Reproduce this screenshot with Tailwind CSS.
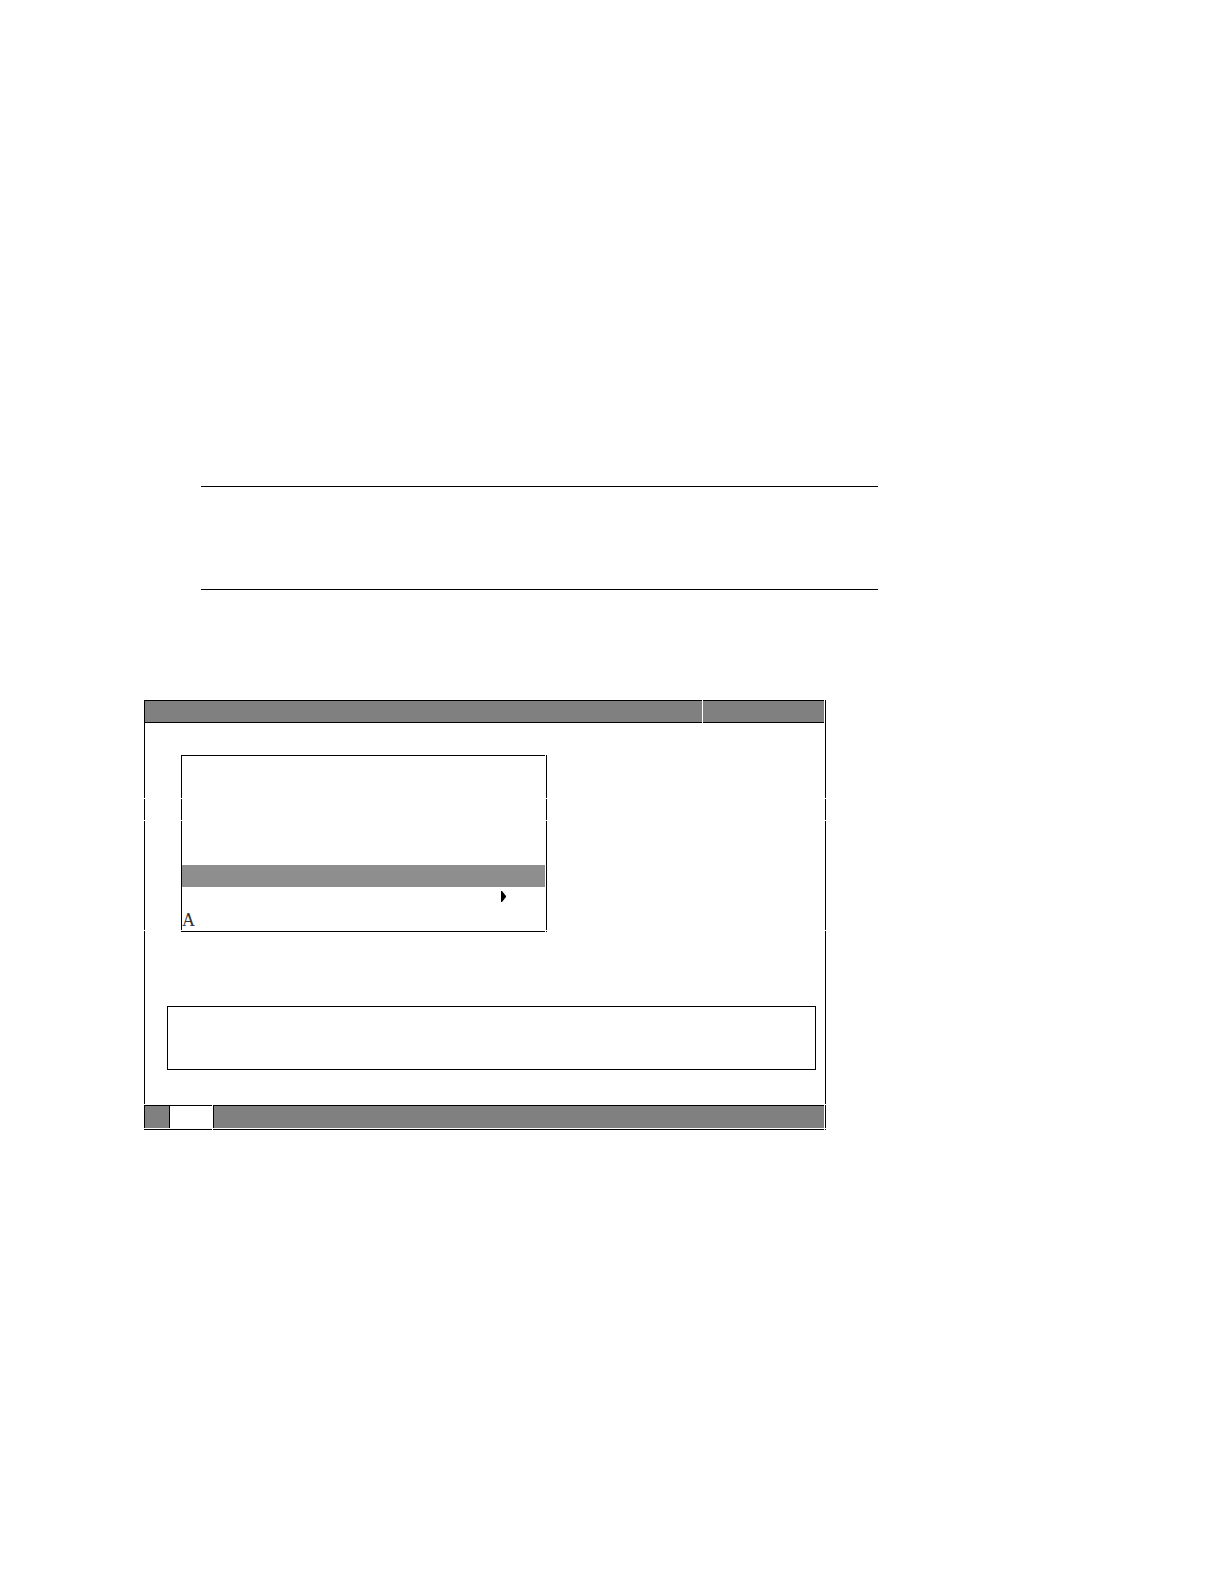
<!DOCTYPE html>
<html lang="en">
<head>
    <meta charset="UTF-8">
    <meta name="viewport" content="width=device-width, initial-scale=1.0">
    <title>Menu Window</title>
    <!-- Tailwind CSS for styling -->
    <script src="https://cdn.jsdelivr.net/npm/@tailwindcss/browser@4"></script>
</head>
<body class="bg-white text-black font-['Liberation_Serif',serif] min-h-screen">

    <!-- Heading area between two rules -->
    <header class="pt-[486px] pl-[201px] pr-[346px]">
        <div class="h-[104px] border-y border-black"></div>
    </header>

    <!-- Window -->
    <main class="pt-[110px] pb-36 pl-36 pr-[398px]">
        <div class="relative">

            <!-- Window frame -->
            <div class="border-x border-black">

                <!-- Title bar -->
                <div class="flex h-[23px] gap-px pr-px">
                    <div class="grow bg-[#808080] border-y border-black"></div>
                    <div class="w-[121px] bg-[#808080] border-y border-black"></div>
                </div>

                <!-- Window body -->
                <div class="pt-8 pb-[35px]">
                    <div class="ml-9 w-[366px]">
                        <ul class="border-x border-black pr-px">
                            <li class="h-[22px] border-t border-black"></li>
                            <li class="h-[22px]"></li>
                            <li class="h-[22px]"></li>
                            <li class="h-[22px]"></li>
                            <li class="h-[22px]"></li>
                            <li class="h-[22px] bg-[#8e8e8e]"></li>
                            <li>
                                <button type="button" aria-label="Open submenu" class="flex h-[22px] w-full items-start justify-end pt-1 pr-[39px]">
                                    <svg class="block h-[11px] w-[5px]" viewBox="0 0 5 11">
                                        <path d="M0 0h1l4 5v1l-4 5H0z" fill="#000"/>
                                    </svg>
                                </button>
                            </li>
                            <li>
                                <button type="button" class="block h-[22px] w-full text-left text-[18px] leading-[22px] text-[#333]">A</button>
                            </li>
                            <li class="border-b border-black"></li>
                        </ul>
                    </div>

                    <!-- Message box -->
                    <div class="mt-[74px] ml-[22px] mr-[9px] h-16 border border-black"></div>
                </div>

            </div>

            <!-- Status bar -->
            <div class="flex h-[25px] border-b border-r border-black pr-px pb-px">
                <div class="w-[26px] bg-[#808080] border-t border-x border-black"></div>
                <button type="button" aria-label="Page" class="w-[42px] border-t border-black"></button>
                <div class="w-px"></div>
                <div class="grow bg-[#808080] border-t border-l border-black"></div>
            </div>

            <!-- Cell seams: thin breaks in the frame lines -->
            <div class="absolute inset-x-0 top-[98px] h-px bg-white"></div>
            <div class="absolute inset-x-0 top-[120px] h-px bg-white"></div>
            <div class="absolute inset-x-0 top-[230px] h-px bg-white"></div>
            <div class="absolute inset-x-0 bottom-[25px] h-px bg-white"></div>
            <div class="absolute inset-x-0 bottom-px h-px bg-white"></div>
            <div class="absolute left-[68px] bottom-0 h-px w-px bg-white"></div>
            <div class="absolute right-px bottom-0 h-px w-px bg-white"></div>
            <div class="absolute left-[401px] top-[231px] h-px w-px bg-white"></div>

        </div>
    </main>

</body>
</html>
